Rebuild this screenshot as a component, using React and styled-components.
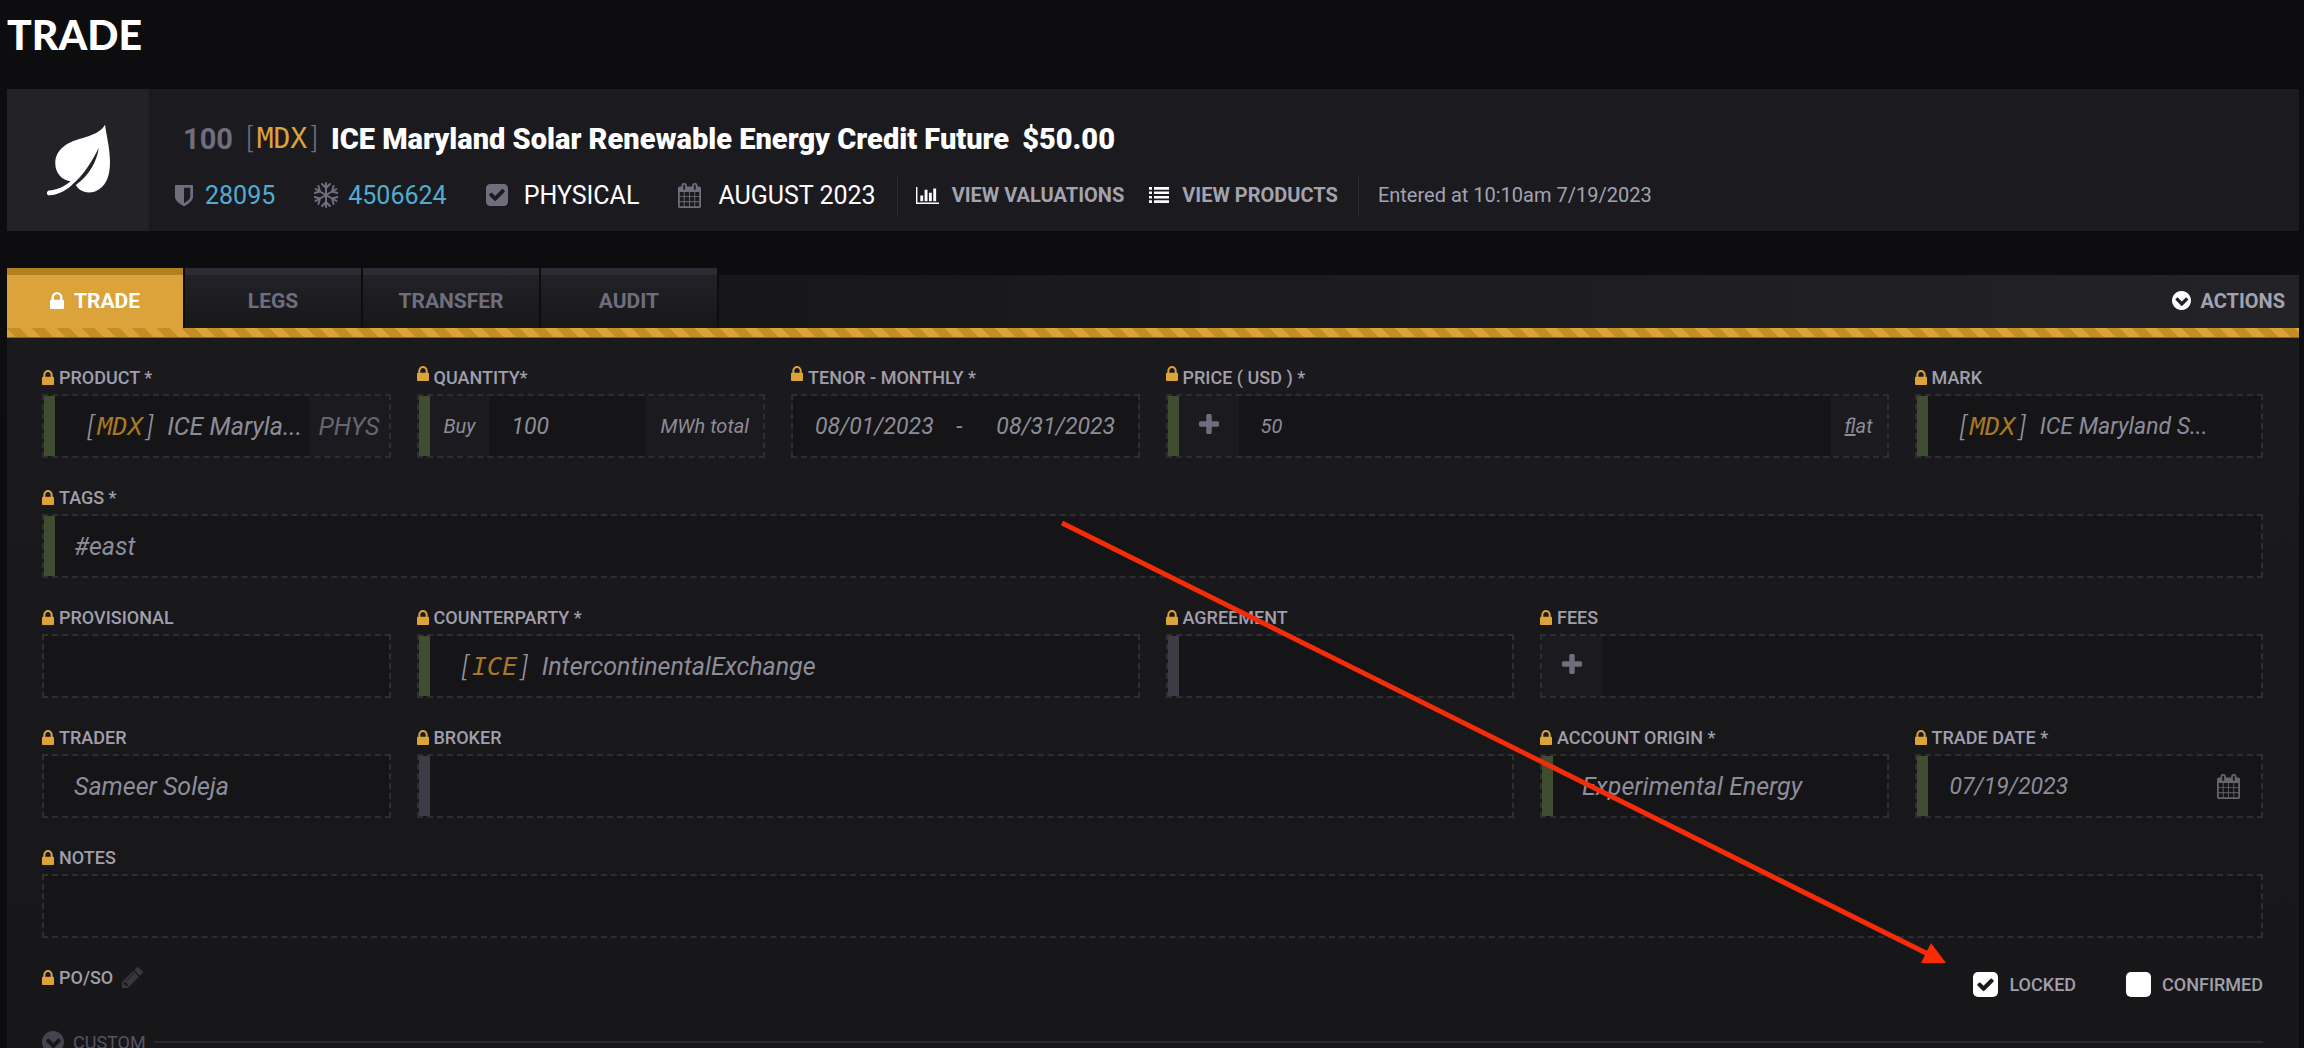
import { useState } from "react";
//styles
import styled, { createGlobalStyle } from "styled-components";

//icon outlines: [viewBox, path]
const icons = {
  lock: [
    "320 128 1152 1408",
    "M640 768h512v-192q0-106-75-181t-181-75-181 75-75 181v192zm832 96v576q0 40-28 68t-68 28h-960q-40 0-68-28t-28-68v-576q0-40 28-68t68-28h32v-192q0-184 132-316t316-132 316 132 132 316v192h32q40 0 68 28t28 68z",
  ],
  plus: [
    "192 128 1408 1408",
    "M1600 736v192q0 40-28 68t-68 28h-416v416q0 40-28 68t-68 28h-192q-40 0-68-28t-28-68v-416h-416q-40 0-68-28t-28-68v-192q0-40 28-68t68-28h416v-416q0-40 28-68t68-28h192q40 0 68 28t28 68v416h416q40 0 68 28t28 68z",
  ],
  calendar: [
    "64 0 1664 1792",
    "M192 1664h288v-288h-288v288zm352 0h320v-288h-320v288zm-352-352h288v-320h-288v320zm352 0h320v-320h-320v320zm-352-384h288v-288h-288v288zm736 736h320v-288h-320v288zm-384-736h320v-288h-320v288zm768 736h288v-288h-288v288zm-384-352h320v-320h-320v320zm-352-864v-288q0-13-9.5-22.5t-22.5-9.5h-64q-13 0-22.5 9.5t-9.5 22.5v288q0 13 9.5 22.5t22.5 9.5h64q13 0 22.5-9.5t9.5-22.5zm736 864h288v-320h-288v320zm-384-384h320v-288h-320v288zm384 0h288v-288h-288v288zm32-480v-288q0-13-9.5-22.5t-22.5-9.5h-64q-13 0-22.5 9.5t-9.5 22.5v288q0 13 9.5 22.5t22.5 9.5h64q13 0 22.5-9.5t9.5-22.5zm384-64v1280q0 52-38 90t-90 38h-1408q-52 0-90-38t-38-90v-1280q0-52 38-90t90-38h128v-96q0-66 47-113t113-47h64q66 0 113 47t47 113v96h384v-96q0-66 47-113t113-47h64q66 0 113 47t47 113v96h128q52 0 90 38t38 90z",
  ],
  pencil: [
    "128 128 1536 1536",
    "M491 1536l91-91-235-235-91 91v107h128v128h107zm523-928q0-22-22-22-10 0-17 7l-542 542q-7 7-7 17 0 22 22 22 10 0 17-7l542-542q7-7 7-17zm-54-192l416 416-832 832h-416v-416zm683 96q0 53-37 90l-166 166-416-416 166-165q36-38 90-38 53 0 91 38l235 234q37 39 37 91z",
  ],
  chart: [
    "0 128 2048 1536",
    "M640 896v512h-256v-512h256zm384-512v1024h-256v-1024h256zm1024 1152v128h-2048v-1536h128v1408h1920zm-640-896v768h-256v-768h256zm384-384v1152h-256v-1152h256z",
  ],
  chevron: [
    "128 128 1536 1536",
    "M967 1317l454-454q19-19 19-45t-19-45l-102-102q-19-19-45-19t-45 19l-307 307-307-307q-19-19-45-19t-45 19l-102 102q-19 19-19 45t19 45l454 454q19 19 45 19t45-19zm697-421q0 209-103 385.5t-279.5 279.5-385.5 103-385.5-103-279.5-279.5-103-385.5 103-385.5 279.5-279.5 385.5-103 385.5 103 279.5 279.5 103 385.5z",
  ],
  checkSquare: [
    "128 128 1536 1536",
    "M813 1299l614-614q19-19 19-45t-19-45l-102-102q-19-19-45-19t-45 19l-467 467-211-211q-19-19-45-19t-45 19l-102 102q-19 19-19 45t19 45l358 358q19 19 45 19t45-19zm851-883v960q0 119-84.5 203.5t-203.5 84.5h-960q-119 0-203.5-84.5t-84.5-203.5v-960q0-119 84.5-203.5t203.5-84.5h960q119 0 203.5 84.5t84.5 203.5z",
  ],
  check: [
    "0 0 1792 1792",
    "M1671 566q0 40-28 68l-724 724-136 136q-28 28-68 28t-68-28l-136-136-362-362q-28-28-28-68t28-68l136-136q28-28 68-28t68 28l294 295 656-657q28-28 68-28t68 28l136 136q28 28 28 68z",
  ],
  shield: [
    "256 128 1280 1536",
    "M1344 960v-640h-448v1137q119-63 213-137 235-184 235-360zm192-768v768q0 86-33.5 170.5t-83 150-118 127.5-126.5 103-121 77.5-89.5 49.5-42.5 20q-12 6-26 6t-26-6q-16-7-42.5-20t-89.5-49.5-121-77.5-126.5-103-118-127.5-83-150-33.5-170.5v-768q0-26 19-45t45-19h1152q26 0 45 19t19 45z",
  ],
  leaf: [
    "74 56 196 218",
    "M252 58C238 82 215 88 180 100C135 112 102 135 102 175C102 203 120 226 148 229C128 246 108 255 83 257C75 258 74 272 84 272C112 271 138 256 155 238C190 208 215 165 233 128C228 170 203 212 164 241C175 262 200 268 222 260C255 246 267 215 267 170C266 125 257 95 252 58Z",
  ],
  list: [
    "0 0 20 18",
    "M0 0h3v3h-3zM5 0h15v3h-15zM0 5h3v3h-3zM5 5h15v3h-15zM0 10h3v3h-3zM5 10h15v3h-15zM0 15h3v3h-3zM5 15h15v3h-15z",
  ],
};

const Icon = ({ name, w, h = w }) => (
  <svg width={w} height={h} viewBox={icons[name][0]} preserveAspectRatio="none" fill="currentColor" aria-hidden="true">
    <path d={icons[name][1]} />
  </svg>
);

const Snowflake = () => (
  <svg width="24" height="28" viewBox="-12 -14 24 28" fill="none" stroke="currentColor" strokeWidth="2" strokeLinecap="round" aria-hidden="true">
    {[0, 60, 120, 180, 240, 300].map((turn) => (
      <path key={turn} transform={`rotate(${turn})`} d="M0 0V-12M-4 -11L0 -7L4 -11" />
    ))}
  </svg>
);

const FieldBox = ({ label, span = 1, bar, raised, children }) => (
  <Field $span={span}>
    <FieldLabel $raised={raised} htmlFor={label}>
      <Icon name="lock" w={12} h={15} />
      {label}
    </FieldLabel>
    <Box $bar={bar}>{children}</Box>
  </Field>
);

const Code = ({ children }) => (
  <CodeTag>
    [<b>{children}</b>]
  </CodeTag>
);

const App = () => {
  const [locked, setLocked] = useState(true);
  const [confirmed, setConfirmed] = useState(false);

  return (
    <Page>
      <GlobalStyle />
      <PageTitle>TRADE</PageTitle>
      <Summary>
        <Emblem>
          <Icon name="leaf" w={65} h={72} />
        </Emblem>
        <div>
          <Headline>
            <em>100</em>
            <Code>MDX</Code>
            <strong>ICE Maryland Solar Renewable Energy Credit Future</strong>
            <strong>$50.00</strong>
          </Headline>
          <Facts>
            <Fact $slot={30}>
              <i><Icon name="shield" w={18} h={21} /></i>
              <a href="#28095">28095</a>
            </Fact>
            <Fact $slot={34}>
              <i><Snowflake /></i>
              <a href="#4506624">4506624</a>
            </Fact>
            <Fact $slot={38}>
              <i><Icon name="checkSquare" w={22} /></i>
              PHYSICAL
            </Fact>
            <Fact $slot={40}>
              <i><Icon name="calendar" w={23} h={25} /></i>
              AUGUST 2023
            </Fact>
            <FactActions>
              <TextButton type="button">
                <Icon name="chart" w={23} h={17} />
                VIEW VALUATIONS
              </TextButton>
              <TextButton type="button">
                <Icon name="list" w={20} h={16} />
                VIEW PRODUCTS
              </TextButton>
            </FactActions>
            <Entered>Entered at 10:10am 7/19/2023</Entered>
          </Facts>
        </div>
      </Summary>

      <Panel>
        <TabBar>
          <Tab type="button" $active>
            <Icon name="lock" w={14} h={17} />
            TRADE
          </Tab>
          <Tab type="button">LEGS</Tab>
          <Tab type="button">TRANSFER</Tab>
          <Tab type="button">AUDIT</Tab>
          <TabSpace>
            <TextButton type="button">
              <Icon name="chevron" w={19} />
              ACTIONS
            </TextButton>
          </TabSpace>
        </TabBar>
        <Hazard />
        <Form>
          <FieldBox label="PRODUCT *" bar="green">
            <Code>MDX</Code>
            <Value id="PRODUCT *" defaultValue="ICE Maryla..." />
            <Unit $large>PHYS</Unit>
          </FieldBox>
          <FieldBox label="QUANTITY*" bar="green" raised>
            <Unit $lead>Buy</Unit>
            <Value id="QUANTITY*" $size={23} $left={22} defaultValue="100" />
            <Unit>MWh total</Unit>
          </FieldBox>
          <FieldBox label="TENOR - MONTHLY *" raised>
            <Value id="TENOR - MONTHLY *" $size={23} $left={22} defaultValue="08/01/2023" />
            <Dash>-</Dash>
            <Value aria-label="Tenor end" $size={23} $left={34} defaultValue="08/31/2023" />
          </FieldBox>
          <FieldBox label="PRICE ( USD ) *" span={2} bar="green" raised>
            <AddButton type="button" aria-label="Add price" $inset>
              <Icon name="plus" w={20} />
            </AddButton>
            <Value id="PRICE ( USD ) *" $size={20} $left={22} defaultValue="50" />
            <Unit>
              <span><u>f</u>lat</span>
            </Unit>
          </FieldBox>
          <FieldBox label="MARK" bar="green">
            <Code>MDX</Code>
            <Value id="MARK" $size={23} defaultValue="ICE Maryland S..." />
          </FieldBox>

          <FieldBox label="TAGS *" span={6} bar="green">
            <Value id="TAGS *" $left={30} defaultValue="#east" />
          </FieldBox>

          <FieldBox label="PROVISIONAL">
            <Value id="PROVISIONAL" $left={30} />
          </FieldBox>
          <FieldBox label="COUNTERPARTY *" span={2} bar="green">
            <Code>ICE</Code>
            <Value id="COUNTERPARTY *" defaultValue="IntercontinentalExchange" />
          </FieldBox>
          <FieldBox label="AGREEMENT" bar="grey">
            <Value id="AGREEMENT" $left={30} />
          </FieldBox>
          <FieldBox label="FEES" span={2}>
            <AddButton type="button" aria-label="Add fee">
              <Icon name="plus" w={20} />
            </AddButton>
            <Value id="FEES" $left={22} />
          </FieldBox>

          <FieldBox label="TRADER">
            <Value id="TRADER" $left={30} defaultValue="Sameer Soleja" />
          </FieldBox>
          <FieldBox label="BROKER" span={3} bar="grey">
            <Value id="BROKER" $left={30} />
          </FieldBox>
          <FieldBox label="ACCOUNT ORIGIN *" bar="green">
            <Value id="ACCOUNT ORIGIN *" $left={40} defaultValue="Experimental Energy" />
          </FieldBox>
          <FieldBox label="TRADE DATE *" bar="green">
            <Value id="TRADE DATE *" $size={23} $left={33} defaultValue="07/19/2023" />
            <DateButton type="button" aria-label="Pick trade date">
              <Icon name="calendar" w={23} h={25} />
            </DateButton>
          </FieldBox>

          <FieldBox label="NOTES" span={6}>
            <Value id="NOTES" $left={30} />
          </FieldBox>
        </Form>

        <Footer>
          <PoSo>
            <Icon name="lock" w={12} h={15} />
            PO/SO
            <EditButton type="button" aria-label="Edit PO/SO">
              <Icon name="pencil" w={21} />
            </EditButton>
          </PoSo>
          <Checks>
            <Check>
              <input type="checkbox" checked={locked} onChange={() => setLocked(!locked)} />
              {locked && <Icon name="check" w={19} />}
              LOCKED
            </Check>
            <Check>
              <input type="checkbox" checked={confirmed} onChange={() => setConfirmed(!confirmed)} />
              {confirmed && <Icon name="check" w={19} />}
              CONFIRMED
            </Check>
          </Checks>
        </Footer>

        <Custom>
          <button type="button">
            <Icon name="chevron" w={22} />
            CUSTOM
          </button>
        </Custom>
      </Panel>

      {/* pointer to the locked box */}
      <Arrow width="890" height="445" viewBox="0 0 890 445" aria-hidden="true">
        <path d="M2 2L870 434" stroke="#f42c0a" strokeWidth="5" />
        <path d="M886 442L871 422L861 442Z" fill="#fb2b04" />
      </Arrow>
    </Page>
  );
};

const GlobalStyle = createGlobalStyle`
  * {
    box-sizing: border-box;
  }
  body {
    margin: 0;
    background: #0d0d0f;
    color: #fff;
    font-family: Roboto, "Open Sans", sans-serif;
  }
  button {
    border: 0;
    padding: 0;
    background: none;
    color: inherit;
    font: inherit;
    cursor: pointer;
  }
  svg {
    display: block;
    flex: none;
  }
`;

const Page = styled.main`
  position: relative;
  height: 100vh;
  overflow: hidden;
  padding: 0 5px 0 7px;
`;

const PageTitle = styled.h1`
  margin: 0;
  padding: 10px 0 29px;
  font-family: Lato, sans-serif;
  font-size: 41px;
  font-weight: 900;
  line-height: 50px;
`;

const Summary = styled.header`
  display: flex;
  min-height: 142px;
  background: #1b1b1f;
`;

const Emblem = styled.div`
  display: flex;
  align-items: center;
  justify-content: center;
  width: 142px;
  background: #222227;
`;

const CodeTag = styled.span`
  display: flex;
  align-items: center;
  gap: 4px;
  font-size: 28px;
  font-weight: 300;
  color: #93929f;
  b {
    color: #a87825;
    font: 25px "DejaVu Sans Mono", monospace;
    font-style: inherit;
  }
`;

const Headline = styled.h2`
  display: flex;
  align-items: center;
  gap: 13px;
  margin: 0;
  padding: 36px 0 0 34px;
  font-size: 29px;
  line-height: 28px;
  white-space: nowrap;
  em {
    font-style: normal;
    color: #6f6e7d;
  }
  ${CodeTag} {
    color: #6f6e7d;
    b {
      color: #dba339;
      font-size: 28px;
      line-height: 28px;
    }
  }
`;

const Facts = styled.div`
  display: flex;
  align-items: center;
  gap: 39px;
  height: 40px;
  margin: 22px 0 0 26px;
  font-size: 25px;
  white-space: nowrap;
`;

const Fact = styled.span`
  display: flex;
  align-items: center;
  i {
    width: ${({ $slot }) => $slot}px;
    color: #6f6e7d;
  }
  a {
    color: #53acd0;
    text-decoration: none;
  }
`;

const TextButton = styled.button`
  display: flex;
  align-items: center;
  gap: 13px;
  font-size: 20px;
  font-weight: 700;
  color: #a3a3b0;
  svg {
    color: #fff;
  }
`;

const FactActions = styled.div`
  display: flex;
  gap: 25px;
  height: 40px;
  margin: 0 -20px 0 -18px;
  padding: 0 20px 0 18px;
  border: 1px solid #2d2d33;
  border-width: 0 1px;
`;

const Entered = styled.span`
  font-size: 20px;
  color: #a3a3b0;
`;

const Panel = styled.section`
  margin-top: 37px;
  background: linear-gradient(#1b1a1f, #19191c 300px, #17171a);
`;

const TabBar = styled.nav`
  display: flex;
  gap: 2px;
  height: 60px;
  background: #0d0d0f;
`;

const Tab = styled.button`
  display: flex;
  align-items: center;
  justify-content: center;
  gap: 10px;
  width: 176px;
  padding-bottom: 2px;
  border-top: 7px solid ${({ $active }) => ($active ? "#b3801f" : "#2c2c34")};
  background: ${({ $active }) => ($active ? "#dba339" : "linear-gradient(#222227, #17171a)")};
  color: ${({ $active }) => ($active ? "#fff" : "#6f6e7d")};
  font-size: 21px;
  font-weight: 700;
`;

const TabSpace = styled.div`
  display: flex;
  flex: 1;
  align-items: center;
  justify-content: flex-end;
  margin-top: 7px;
  padding: 0 14px 2px 0;
  background: linear-gradient(90deg, #17171a, #232327);
  ${TextButton} {
    gap: 9px;
  }
`;

const Hazard = styled.div`
  height: 10px;
  border-bottom: 1px solid #8a6420;
  background: linear-gradient(45deg, #c58e25 25%, #dba339 25% 50%, #c58e25 50% 75%, #dba339 75%);
  background-size: 25px 25px;
`;

const Form = styled.form`
  display: grid;
  grid-template-columns: repeat(6, 1fr);
  gap: 22px 26px;
  padding: 22px 36px 0 35px;
`;

const Field = styled.div`
  grid-column: span ${({ $span }) => $span};
  min-width: 0;
`;

const FieldLabel = styled.label`
  display: flex;
  align-items: center;
  gap: 5px;
  height: 34px;
  font-size: 18px;
  font-weight: 500;
  color: #a09fab;
  white-space: nowrap;
  svg {
    margin-bottom: ${({ $raised }) => ($raised ? 8 : 0)}px;
    color: #dba339;
  }
`;

const barColors = { green: "#414d30", grey: "#3c3b46" };

const Box = styled.div`
  position: relative;
  display: flex;
  align-items: stretch;
  height: 64px;
  border: 2px dashed #2d2d32;
  background: #151517;
  background-clip: padding-box;
  color: #8d8c99;
  font-style: italic;
  &::before {
    content: "";
    position: absolute;
    top: 0;
    bottom: 0;
    left: 0;
    width: ${({ $bar }) => ($bar ? 11 : 0)}px;
    background: ${({ $bar }) => barColors[$bar]};
  }
  > ${CodeTag} {
    padding-left: 43px;
    margin-right: 14px;
  }
`;

const Value = styled.input`
  flex: 1;
  width: 0;
  min-width: 0;
  border: 0;
  padding: 0 0 0 ${({ $left = 0 }) => $left}px;
  background: transparent;
  color: inherit;
  font: italic ${({ $size = 25 }) => $size}px Roboto, "Open Sans", sans-serif;
  outline: 0;
`;

const Unit = styled.span`
  display: flex;
  align-items: center;
  padding: 0 ${({ $large }) => ($large ? 9 : 14)}px;
  margin-left: ${({ $lead }) => ($lead ? 11 : 0)}px;
  background: #1b1a1f;
  color: ${({ $large }) => ($large ? "#66656f" : "inherit")};
  font-size: ${({ $large }) => ($large ? 25 : 20)}px;
`;

const Dash = styled.span`
  align-self: center;
  font-size: 23px;
`;

const AddButton = styled.button`
  display: flex;
  align-items: center;
  justify-content: center;
  width: 60px;
  padding-bottom: 4px;
  margin-left: ${({ $inset }) => ($inset ? 11 : 0)}px;
  background: #1b1a1f;
  color: #6f6e7d;
`;

const DateButton = styled.button`
  padding: 0 21px;
  color: #66656b;
`;

const Footer = styled.div`
  display: flex;
  align-items: flex-start;
  justify-content: space-between;
  padding: 22px 36px 0 35px;
`;

const PoSo = styled.div`
  display: flex;
  align-items: center;
  gap: 5px;
  height: 34px;
  font-size: 18px;
  font-weight: 500;
  color: #a09fab;
  > svg {
    color: #dba339;
  }
`;

const EditButton = styled.button`
  margin-left: 4px;
  color: #38383c;
`;

const Checks = styled.div`
  display: flex;
  gap: 50px;
  padding-top: 12px;
`;

const Check = styled.label`
  position: relative;
  display: flex;
  align-items: center;
  gap: 11px;
  height: 25px;
  font-size: 18px;
  font-weight: 500;
  color: #a09fab;
  input {
    appearance: none;
    width: 25px;
    height: 25px;
    margin: 0;
    border-radius: 5px;
    background: #fff;
  }
  svg {
    position: absolute;
    top: 3px;
    left: 3px;
    color: #1b1b1f;
    pointer-events: none;
  }
`;

const Custom = styled.div`
  display: flex;
  align-items: center;
  gap: 8px;
  height: 60px;
  margin-top: 15px;
  padding: 0 36px 0 35px;
  button {
    display: flex;
    align-items: center;
    gap: 9px;
    font-size: 18px;
    color: #55545f;
  }
  svg {
    color: #45444e;
  }
  &::after {
    content: "";
    flex: 1;
    height: 2px;
    background: #2a2a2f;
  }
`;

const Arrow = styled.svg`
  position: absolute;
  top: 521px;
  left: 1060px;
  pointer-events: none;
`;

export default App;
